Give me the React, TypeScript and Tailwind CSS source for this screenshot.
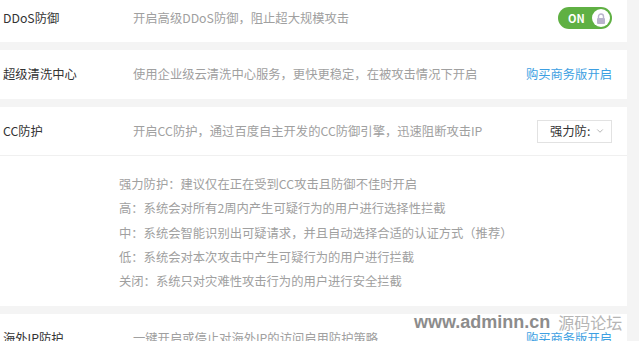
import { ChevronDown } from "lucide-react";

const font = { fontFamily: '"Noto Sans CJK SC", "Noto Sans", sans-serif' };

const Toggle = () => (
  <div className="flex h-[22px] w-[54px] items-center justify-between rounded-full bg-[#5fb043] pl-[10px] pr-[2px]">
    <span className="text-[11px] font-bold leading-none text-white">ON</span>
    <span className="flex h-[18px] w-[18px] items-center justify-center rounded-full bg-white">
      <svg width="10" height="11" viewBox="0 0 10 11">
        <path d="M2.5 5V3.5a2.5 2.5 0 0 1 5 0V5" fill="none" stroke="#b9b3cc" strokeWidth="1.4" />
        <rect x="1" y="5" width="8" height="6" rx="1" fill="#b9b3cc" />
      </svg>
    </span>
  </div>
);

const BuyLink = () => (
  <a className="text-[12.3px] text-[#3d9fe2]">购买商务版开启</a>
);

const Row = ({ label, desc, right }: { label: string; desc: string; right?: React.ReactNode }) => (
  <div className="flex h-[48px] items-center pl-[3px] pr-[15px]">
    <div className="w-[130px] text-[12.3px] text-[#333]">{label}</div>
    <div className="flex-1 text-[12.3px] text-[#a0a0a0]">{desc}</div>
    {right}
  </div>
);

const levels = [
  "强力防护：建议仅在正在受到CC攻击且防御不佳时开启",
  "高：系统会对所有2周内产生可疑行为的用户进行选择性拦截",
  "中：系统会智能识别出可疑请求，并且自动选择合适的认证方式（推荐）",
  "低：系统会对本次攻击中产生可疑行为的用户进行拦截",
  "关闭：系统只对灾难性攻击行为的用户进行安全拦截",
];

export default function App() {
  return (
    <div className="relative h-[341px] w-[639px] overflow-hidden bg-[#f4f4f4]" style={font}>
      <div className="mt-[-7px] flex w-[627px] flex-col gap-[8px]">
        <div className="bg-white pt-[1px]">
          <Row label="DDoS防御" desc="开启高级DDoS防御，阻止超大规模攻击" right={<Toggle />} />
        </div>
        <div className="bg-white pb-[1px]">
          <Row label="超级清洗中心" desc="使用企业级云清洗中心服务，更快更稳定，在被攻击情况下开启" right={<BuyLink />} />
        </div>
        <div className="bg-white">
          <div className="border-b border-[#f0f0f0]">
            <Row
              label="CC防护"
              desc="开启CC防护，通过百度自主开发的CC防御引擎，迅速阻断攻击IP"
              right={
                <div className="flex h-[23px] w-[75px] items-center justify-between border border-[#e2e2e2] pl-[12px] pr-[6px]">
                  <span className="text-[12.3px] text-[#333]">强力防:</span>
                  <ChevronDown size={10} strokeWidth={1.5} className="text-[#888]" />
                </div>
              }
            />
          </div>
          <div className="pl-[119px] pt-[16px] pb-[13px]">
            {levels.map((t) => (
              <div key={t} className="text-[12.3px] leading-[24.3px] text-[#a0a0a0]">{t}</div>
            ))}
          </div>
        </div>
        <div className="bg-white">
          <Row label="海外IP防护" desc="一键开启或停止对海外IP的访问启用防护策略" right={<BuyLink />} />
        </div>
      </div>
      <div className="absolute left-[414px] top-[310px] flex items-center gap-[8px] whitespace-nowrap text-[#8c8c8c]">
        <span className="text-[18px] font-bold leading-[24px]" style={{ fontFamily: '"Liberation Sans", Arial, sans-serif' }}>www.adminn.cn</span>
        <span className="text-[16px] leading-[24px] text-[#b5b5b5]">源码论坛</span>
      </div>
    </div>
  );
}
